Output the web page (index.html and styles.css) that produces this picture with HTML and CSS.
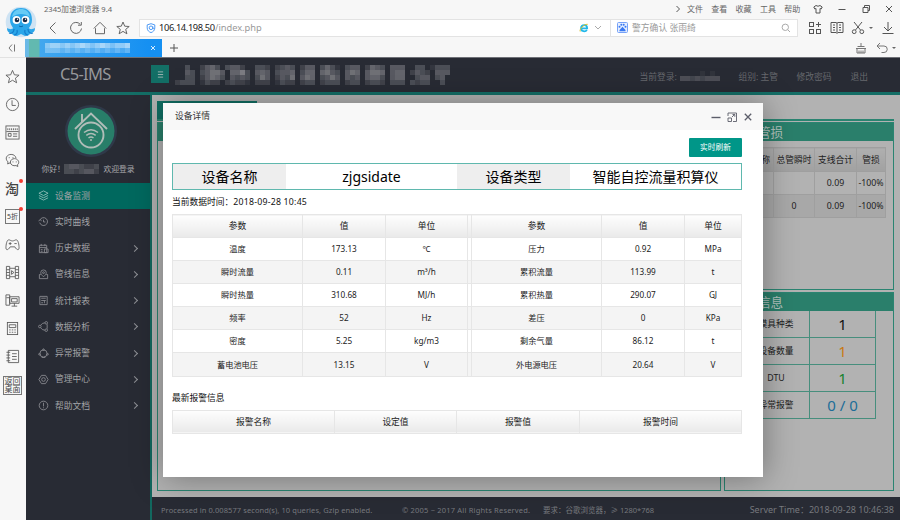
FILE: index.html
```html
<!DOCTYPE html>
<html lang="zh-CN">
<head>
<meta charset="utf-8">
<title>C5-IMS</title>
<link rel="stylesheet" href="styles.css">
</head>
<body>
<div class="browser">
  <header class="chrome">
    <svg class="mascot" viewBox="0 0 32 32">
      <circle cx="16" cy="16" r="15.3" fill="#cfe3f3"/>
      <path d="M5 14C5 5 10 2 16 2s11 3 11 12c0 4-2 6-3 8 1 2 4 1 6 0 0 4-2 5-5 5 0 2-2 3-5 3l-4-2-4 2c-3 0-5-1-5-3-3 0-5-1-5-5 2 1 5 2 6 0-1-2-3-4-3-8z" fill="#2ba6e9"/>
      <path d="M7 11C8 5 12 3 16 3s8 2 9 8C20 7 12 7 7 11z" fill="#67cbf5"/>
      <path d="M9 23c0 3-2 5-5 4m8-3c1 3-1 5-3 5m14-6c0 3 2 5 5 4m-8-3c-1 3 1 5 3 5" fill="none" stroke="#137dcc" stroke-width="1.2"/>
      <circle cx="11.500" cy="14" r="3.900" fill="#fff"/><circle cx="20.500" cy="14" r="3.900" fill="#fff"/>
      <circle cx="12" cy="14" r="2.300" fill="#182a45"/><circle cx="20" cy="14" r="2.300" fill="#182a45"/>
      <circle cx="12.500" cy="13.300" r=".7" fill="#fff"/><circle cx="20.500" cy="13.300" r=".7" fill="#fff"/>
      <path d="M14 20q2 1.500 4 0" stroke="#0b68a9" fill="none"/>
    </svg>
    <div class="chrome-rows">
      <div class="title-row">
        <span class="app-name">2345加速浏览器 9.4</span>
        <svg class="more" viewBox="0 0 6 8"><path d="M1.500 1l3 3-3 3"/></svg>
        <nav class="menus"><span>文件</span><span>查看</span><span>收藏</span><span>工具</span><span>帮助</span></nav>
        <div class="window-buttons">
          <svg viewBox="0 0 10 10"><path d="M3 1.500L.8 3l1 2L3 4.500V9h4V4.500L8.200 5l1-2L7 1.500Q5 3 3 1.500z"/></svg>
          <svg viewBox="0 0 10 10"><path d="M1.500 5.500h7"/></svg>
          <svg viewBox="0 0 10 10"><path d="M2 3.500h5v5H2zM3.500 3.500v-2h5v5H7"/></svg>
          <svg viewBox="0 0 10 10"><path d="M2 2l6 6M8 2L2 8"/></svg>
        </div>
      </div>
      <div class="address-row">
        <div class="nav-icons">
          <svg viewBox="0 0 14 14"><path d="M9.500 1.500L4 7l5.500 5.500"/></svg>
          <svg viewBox="0 0 14 14"><path d="M12.500 7.500a5.500 5.500 0 1 1-1.300-4.200M12.300 1v3.200H9"/></svg>
          <svg viewBox="0 0 14 14"><path d="M.8 7.500L7 1.300l6.200 6.200M2.500 7.200v5.500h9V7.200"/></svg>
          <svg viewBox="0 0 14 14"><path d="M7 1l1.700 4.200 4.500.3-3.500 2.900 1.200 4.400L7 10.400l-3.900 2.400 1.200-4.400L.8 5.500l4.500-.3z"/></svg>
        </div>
        <div class="url">
          <svg class="shield" viewBox="0 0 10 10"><path d="M5 .7l3.800 1.200v3C8.800 7.500 7 8.900 5 9.600 3 8.900 1.200 7.500 1.200 4.900v-3z"/><circle cx="5" cy="4.800" r="1.800"/><path d="M6.800 3.500v2q.8 1 1.500-.5"/></svg>
          <span class="host">106.14.198.50</span><span class="path">/index.php</span>
          <svg class="ie" viewBox="0 0 10 10"><path d="M2.200 5.300h6q0-3.100-3-3.100-3.200 0-3.200 3.100 0 3 3.200 3 2 0 2.700-1.500" stroke="#22b8ea" stroke-width="1.700" fill="none"/><path d="M1.200 8.500C.2 6.500 4.500 1 8.700 1.300" stroke="#d9c22a" stroke-width="1" fill="none"/></svg>
          <svg class="drop" viewBox="0 0 8 6"><path d="M1 1l3 3 3-3"/></svg>
        </div>
        <div class="search">
          <svg class="paw" viewBox="0 0 11 11"><rect x=".5" y=".5" width="10" height="10" rx="1" fill="#e7effe" stroke="#77a2f8"/><g fill="#3979f2"><circle cx="2.500" cy="4.800" r="1"/><circle cx="4.300" cy="2.800" r="1"/><circle cx="6.700" cy="2.800" r="1"/><circle cx="8.500" cy="4.800" r="1"/><path d="M5.500 4.700L8.500 8v1.300H2.500V8z"/></g></svg>
          <span>警方确认 张雨绮</span>
          <svg class="lens" viewBox="0 0 10 10"><circle cx="4.300" cy="4.300" r="3.200"/><path d="M6.700 6.700L9 9"/></svg>
        </div>
        <div class="tools">
          <svg viewBox="0 0 14 14"><rect x="1.500" y="1.500" width="4" height="4"/><rect x="1.500" y="8.500" width="4" height="4"/><rect x="8.500" y="8.500" width="4" height="4"/><path d="M10.500 1v5M8 3.500h5"/></svg>
          <svg viewBox="0 0 14 14"><path d="M1 1.500h5l1 .7 1-.7h5v10H8l-1 1-1-1H1zM7 2v10M3 4h2M3 6.500h2M3 9h2M9 4h2M9 6.500h2M9 9h2"/></svg>
          <svg viewBox="0 0 14 14"><path d="M3 1l6.500 8M11 1L4.500 9"/><circle cx="3.200" cy="10.700" r="1.900"/><circle cx="10.800" cy="10.700" r="1.900"/></svg>
          <i class="caret"></i>
          <svg viewBox="0 0 14 14"><path d="M7 1v9M3 6l4 4 4-4M1.500 12.500h11"/></svg>
        </div>
      </div>
    </div>
  </header>

  <div class="tab-row">
    <svg class="collapse" viewBox="0 0 10 10"><path d="M5 1.500L2 5l3 3.500M7.500 1.500v7"/></svg>
    <div class="tab">
      <svg class="tab-mosaic" data-mosaic="tab" viewBox="0 0 105 10"></svg>
      <svg class="tab-close" viewBox="0 0 6 6"><path d="M1 1l4 4M5 1L1 5"/></svg>
    </div>
    <svg class="plus" viewBox="0 0 10 10"><path d="M5 1v8M1 5h8"/></svg>
    <div class="tab-tools">
      <svg viewBox="0 0 12 12"><path d="M6 1v3M2.500 4.500h7M1 6.500h10M2 6.500v4.500h8V6.500M4 11V8.500M6 11V8.500M8 11V8.500"/></svg>
      <svg viewBox="0 0 12 12"><path d="M4 1L1 4l3 3M1.300 4H8a3 3 0 0 1 0 6.500H5.500"/></svg>
      <i class="caret"></i>
    </div>
  </div>

  <div class="body-row">
    <aside class="rail">
      <svg viewBox="0 0 16 16"><path d="M8 1.500l2 4.700 5 .4-3.900 3.200 1.300 4.900L8 12l-4.400 2.700 1.300-4.900L1 6.600l5-.4z"/></svg>
      <svg viewBox="0 0 16 16"><circle cx="8" cy="8" r="6.500"/><path d="M7.500 3.500V9h4"/></svg>
      <svg viewBox="0 0 16 16"><rect x="1" y="1" width="14" height="14"/><path d="M3 3.500v2M5 3.500v2M7 3.500v2M9 3.500v2M11 3.500v2M13 3.500v2M1.500 7h13M3.500 9h3v3h-3zM8.500 9.500H13M8.500 12H13" /></svg>
      <svg viewBox="0 0 16 16"><path d="M6 10.200l-3.200 1.500.4-2.200C-1 5.500 2.500 1.500 6.500 1.500c3 0 5 1.900 5.200 4M10.200 6c-2.500 0-4.500 1.700-4.500 3.800 0 3 3.300 4.300 6 3.600l2 1-.4-1.800C16.500 9.900 13.500 6 10.200 6z"/><path d="M4.500 4.500v1M8.500 4.500v1M8.500 9v1M12 9v1"/></svg>
      <span class="rail-word"><b>淘</b><i class="dot"></i></span>
      <span class="rail-word boxed"><b>5折</b><i class="dot"></i></span>
      <svg viewBox="0 0 16 16"><path d="M4 3C2 3 1 8 1 11.500 1 15 4 13.500 5.500 10.500h5C12 13.500 15 15 15 11.500 15 8 14 3 12 3c-1.500 0-2 1.200-4 1.200S5.500 3 4 3zM5.500 5.500v3M4 7h3M10 7h2.500"/></svg>
      <svg viewBox="0 0 16 16"><path d="M1.500 1.500v13h3.500v-13zM11 1.500v13h3.500v-13zM5 3.500h6M5 12.500h6M1.500 5H5M1.500 8H5M1.500 11H5M11 5h3.500M11 8h3.500M11 11h3.500M7 6v4l2.500-2z"/></svg>
      <svg viewBox="0 0 16 16"><path d="M1 2h4v11H1zM5 4h10v7H5zM7 6h6v3.500H7zM10 11v3M7 14h6M1.500 5H5"/></svg>
      <svg viewBox="0 0 16 16"><rect x="2.500" y="1.500" width="11" height="13"/><path d="M4.500 4h7v3h-7zM4.500 9.500h1.500M7.200 9.500h1.600M10 9.500h1.500M4.500 12h1.500M7.200 12h1.600M10 12h1.500"/></svg>
      <svg viewBox="0 0 16 16"><path d="M3.500 1.500h11v13h-11zM1.500 3.500h4M1.500 6.500h4M1.500 9.500h4M1.500 12.500h4M7.500 5h5M7.500 8h5M7.500 11h5"/></svg>
      <span class="desk">返回桌面</span>
    </aside>

    <div class="app">
      <header class="app-head">
        <div class="brand">C5-IMS</div>
        <div class="toggle"><svg viewBox="0 0 8 8"><path d="M1 1h6M1 4h6M1 7h6"/></svg></div>
        <svg class="title-mosaic" data-mosaic="title" viewBox="0 0 275 20"></svg>
        <div class="user-links"><span class="login">当前登录:</span><svg class="user-mosaic" data-mosaic="user" viewBox="0 0 40 10"></svg><span class="group">组别: 主管</span><span class="pwd">修改密码</span><span>退出</span></div>
      </header>

      <div class="app-body">
        <nav class="sidebar">
          <svg class="avatar" viewBox="0 0 54 54">
            <circle cx="27" cy="27" r="26" fill="#2f3949"/><circle cx="27" cy="27" r="23.500" fill="#287e69"/>
            <g fill="none" stroke="#b0bdb8" stroke-width="1.900"><circle cx="27" cy="31" r="12.500"/><path d="M11 25L27 9.500 43 25"/><path d="M18 18V10"/></g>
            <g fill="none" stroke="#b0bdb8" stroke-width="1.500"><path d="M20 28.500q7-5.500 14 0M22.300 31.300q4.700-3.600 9.400 0M24.500 34q2.500-2 5 0"/></g><circle cx="27" cy="36" r="1" fill="#b0bdb8"/>
          </svg>
          <div class="hello"><span>你好<em>！</em></span><svg data-mosaic="name" viewBox="0 0 35 10"></svg><span>欢迎登录</span></div>
          <ul class="menu">
            <li class="active"><svg viewBox="0 0 12 12"><path d="M6 1l5 2.500L6 6 1 3.500zM1 6l5 2.500L11 6M1 8.500L6 11l5-2.500"/></svg><span>设备监测</span></li>
            <li><svg viewBox="0 0 12 12"><path d="M2.200 4.200a4.300 4.300 0 1 1-.3 3M.7 5.700l1.500-1.800L4 5.300M6 4v2.500h2"/></svg><span>实时曲线</span></li>
            <li class="sub"><svg viewBox="0 0 12 12"><path d="M1.500 2.500h8v8h-8zM1.500 5h8M3.500 1v2.500M7.500 1v2.500M3 7.200h2M3 9h2M7 6.500h4v4H7z"/></svg><span>历史数据</span><i></i></li>
            <li class="sub"><svg viewBox="0 0 12 12"><path d="M3 6H1.500v4.500h9V6H9"/><path d="M6 8.500C4 6.500 3 5.500 3 4a3 3 0 0 1 6 0c0 1.500-1 2.500-3 4.500z"/><circle cx="6" cy="4" r="1"/></svg><span>管线信息</span><i></i></li>
            <li class="sub"><svg viewBox="0 0 12 12"><path d="M2 1.500h8v9H2zM3.500 3.500h5M3.500 6h5M3.500 8.500h2M7 6v3"/></svg><span>统计报表</span><i></i></li>
            <li class="sub"><svg viewBox="0 0 12 12"><path d="M3 4.500Q4.500 2 7.500 2M3 7.500Q4.500 10 7.500 10M10 3.500v5"/><circle cx="2" cy="6" r="1.400"/><circle cx="9" cy="2" r="1.400"/><circle cx="9" cy="10" r="1.400"/></svg><span>数据分析</span><i></i></li>
            <li class="sub"><svg viewBox="0 0 12 12"><circle cx="6" cy="6" r="3.900"/><circle cx="6" cy="1.800" r=".9"/><circle cx="1.600" cy="6.800" r=".9"/><circle cx="10.400" cy="6.800" r=".9"/><path d="M4 10.300h4"/></svg><span>异常报警</span><i></i></li>
            <li class="sub"><svg viewBox="0 0 12 12"><path d="M3.800 1.500h4.400L11 6l-2.800 4.500H3.800L1 6z"/><circle cx="6" cy="6" r="2"/></svg><span>管理中心</span><i></i></li>
            <li class="sub"><svg viewBox="0 0 12 12"><circle cx="6" cy="6" r="4.700"/><path d="M6 3v4M6 8v1"/></svg><span>帮助文档</span><i></i></li>
          </ul>
        </nav>

        <div class="workspace">
          <main class="main">
            <div class="tab-strip"><span></span></div>
            <div class="columns">
              <section class="panel"><h2></h2></section>
              <div class="right-col">
                <section class="panel loss">
                  <h2>管损</h2>
                  <table class="loss-table">
                    <tr><th class="w-name">名称</th><th class="w-main">总管瞬时</th><th class="w-sum">支线合计</th><th>管损</th></tr>
                    <tr><td></td><td></td><td>0.09</td><td>-100%</td></tr>
                    <tr class="even"><td></td><td>0</td><td>0.09</td><td>-100%</td></tr>
                  </table>
                </section>
                <section class="panel">
                  <h2>信息</h2>
                  <table class="info-table">
                    <tr><th>模具种类</th><td>1</td></tr>
                    <tr><th>设备数量</th><td class="orange">1</td></tr>
                    <tr><th>DTU</th><td class="green">1</td></tr>
                    <tr><th>异常报警</th><td class="blue">0 / 0</td></tr>
                  </table>
                </section>
              </div>
            </div>
          </main>
          <footer class="foot"><span class="proc">Processed in 0.008577 second(s), 10 queries, Gzip enabled.</span><span class="copy">© 2005 ~ 2017 All Rights Reserved.</span><span class="req">要求<em>：</em>谷歌浏览器<em>，</em>≥ 1280*768</span><span class="time">Server Time<em>：</em>2018-09-28 10:46:38</span></footer>
        </div>
      </div>

      <div class="dialog">
        <div class="dialog-head">
          <span>设备详情</span>
          <svg viewBox="0 0 10 10"><path d="M.5 5.500h9" stroke-width="1.400"/></svg>
          <svg viewBox="0 0 10 10"><path d="M1 4V1h8.500v8.500H6M1 6h3.500v3.500H1zM5 5l2.500-2.500M5.500 2.500h2.300v2.300"/></svg>
          <svg viewBox="0 0 10 10"><path d="M1.800 1.800l6.400 6.400M8.200 1.800L1.800 8.200" stroke-width="1.300"/></svg>
        </div>
        <div class="dialog-body">
          <div class="actions"><button>实时刷新</button></div>
          <div class="device"><b>设备名称</b><span>zjgsidate</span><b>设备类型</b><span>智能自控流量积算仪</span></div>
          <p class="stamp">当前数据时间<em>：</em><time>2018-09-28 10:45</time></p>
          <table class="grid params">
            <colgroup><col class="c1"><col class="c2"><col class="c3"><col class="c4"><col class="c5"><col class="c6"><col class="c7"></colgroup>
            <tr><th>参数</th><th>值</th><th>单位</th><th></th><th>参数</th><th>值</th><th>单位</th></tr>
            <tr><td>温度</td><td>173.13</td><td>℃</td><td></td><td>压力</td><td>0.92</td><td>MPa</td></tr>
            <tr><td>瞬时流量</td><td>0.11</td><td>m³/h</td><td></td><td>累积流量</td><td>113.99</td><td>t</td></tr>
            <tr><td>瞬时热量</td><td>310.68</td><td>MJ/h</td><td></td><td>累积热量</td><td>290.07</td><td>GJ</td></tr>
            <tr><td>频率</td><td>52</td><td>Hz</td><td></td><td>差压</td><td>0</td><td>KPa</td></tr>
            <tr><td>密度</td><td>5.25</td><td>kg/m3</td><td></td><td>剩余气量</td><td>86.12</td><td>t</td></tr>
            <tr><td>蓄电池电压</td><td>13.15</td><td>V</td><td></td><td>外电源电压</td><td>20.64</td><td>V</td></tr>
          </table>
          <p class="alarm-title">最新报警信息</p>
          <table class="grid alarms">
            <colgroup><col class="a1"><col class="a2"><col class="a3"><col class="a4"></colgroup>
            <tr><th>报警名称</th><th>设定值</th><th>报警值</th><th>报警时间</th></tr>
          </table>
        </div>
      </div>
    </div>
  </div>
</div>
<script src="mosaic.js"></script>
</body>
</html>
```
FILE: mosaic.js
```js
// Pixelated blocks that hide private names. Each digit is the opacity of a 5px tile.
const tiles = {
  title: { color: "#a0a0a4", rows: [
    "0030024530344200332023430244035310344025430444003301333",
    "0043034664055730454034450355056430465046650455024320444",
    "0033024653043430364024360465034640434045530455003440340",
    "2333013220232210222013220233023330233023320333032330030"
  ]},
  user: { color: "#85858a", rows: ["00001010", "44343444"] },
  name: { color: "#9a9a9f", rows: ["3443223", "3323442"] },
  tab: { color: "#ffffff", rows: ["000455454565456545560", "000333232323232323230"] }
};

document.querySelectorAll("[data-mosaic]").forEach(svg => {
  const { color, rows } = tiles[svg.dataset.mosaic];
  rows.forEach((row, y) => [...row].forEach((level, x) => {
    if (level === "0") return;
    const r = document.createElementNS("http://www.w3.org/2000/svg", "rect");
    r.setAttribute("x", x * 5);
    r.setAttribute("y", y * 5);
    r.setAttribute("width", 5);
    r.setAttribute("height", 5);
    r.setAttribute("fill", color);
    r.setAttribute("fill-opacity", level / 10);
    svg.append(r);
  }));
});
```
FILE: styles.css
```css
* { box-sizing: border-box; }
body { margin: 0; font: 8.75px/12px "Noto Sans", "Noto Sans CJK SC", sans-serif; color: #222; }
svg { display: block; flex: none; fill: none; stroke: #555; stroke-width: 1; }
svg [fill]:not([stroke]), [data-mosaic] rect { stroke: none; }
h2, p, ul { margin: 0; padding: 0; }
table { border-collapse: collapse; table-layout: fixed; }
/* full-width punctuation centred in its cell */
em { font-style: normal; font-family: "Noto Sans CJK TC", sans-serif; }

.browser { width: 900px; height: 520px; overflow: hidden; display: flex; flex-direction: column; background: #f7f7f7; }

/* browser chrome */
.chrome { height: 38px; display: flex; padding-left: 5px; }
.mascot { width: 32px; height: 32px; margin-top: 6px; stroke: none; }
.chrome-rows { flex: 1; display: flex; flex-direction: column; }
.title-row { height: 18px; display: flex; align-items: center; padding-left: 7px; color: #666; font-size: 8px; }
.app-name { width: 631px; white-space: nowrap; font-size: 7.600px; }
.more { width: 6px; height: 8px; }
.menus { display: flex; gap: 8.3px; margin-left: 6px; }
.menus span { width: 16px; white-space: nowrap; }
.window-buttons { display: flex; gap: 13.7px; margin-left: 13px; }
.window-buttons svg { width: 10px; height: 10px; }
.address-row { height: 19px; display: flex; align-items: center; padding-left: 9px; }
.nav-icons { display: flex; gap: 9.3px; width: 93px; }
.nav-icons svg { width: 14px; height: 14px; stroke: #666; }
.url { width: 472px; height: 18px; background: #fff; border: 1px solid #e3e3e3; display: flex; align-items: center; padding-left: 6px; }
.shield { width: 10px; height: 10px; stroke: #4f9bf5; margin-right: 3px; }
.host, .path { font: 9.3px/14px "Noto Sans", sans-serif; }
.host { letter-spacing: -.380px; color: #222; }
.path { color: #999; letter-spacing: -.050px; margin-left: .4px; }
.ie { width: 10px; height: 10px; margin-left: auto; }
.drop { width: 8px; height: 6px; margin: 0 8px 0 5px; stroke: #aaa; }
.search { width: 187px; height: 18px; background: #fff; border: 1px solid #e3e3e3; border-left: 0; display: flex; align-items: center; padding: 0 6px 0 6px; color: #999; font-size: 8.800px; }
.paw { width: 11px; height: 11px; margin-right: 4px; }
.lens { width: 10px; height: 10px; margin-left: auto; stroke: #aaa; }
.tools { display: flex; align-items: center; margin-left: 10px; }
.tools svg { width: 14px; height: 14px; margin-right: 7.500px; }
.caret { border: 2px solid transparent; border-top-color: #666; border-bottom: 0; height: 2px; }
.tools .caret { margin: 0 8px 0 -4px; }
.tab-row { height: 19px; display: flex; align-items: center; }
.collapse { width: 10px; height: 10px; margin: 0 8px 0 7px; stroke: #777; }
.tab { width: 137px; height: 18px; margin-top: 1px; background: linear-gradient(90deg, #6ab7ea 0, #6abbe0 4px, #62b9b0 4px, #62b9b0 14px, #42a7ee 15px, #1590f2 90%); display: flex; align-items: center; justify-content: space-between; padding: 0 6px 0 5px; }
.tab-mosaic { width: 105px; height: 10px; }
.tab-close { width: 6px; height: 6px; stroke: #d6ebfc; }
.plus { width: 10px; height: 10px; margin-left: 7px; }
.tab-tools { margin-left: auto; display: flex; align-items: center; gap: 9px; padding-right: 4px; }
.tab-tools svg { width: 12px; height: 12px; stroke: #777; }
.tab-tools .caret { margin-left: -5px; }

.body-row { flex: 1; display: flex; min-height: 0; }
.rail { width: 26px; padding: 4.500px 1px 0 0; display: flex; flex-direction: column; align-items: center; border-top: 1px solid #e2e2e2; }
.rail > * { flex: none; width: 15px; height: 15px; margin: 6px 0 7.100px; stroke-width: .9; }
.rail-word { position: relative; color: #444; }
.rail-word b { font-size: 14px; line-height: 15px; font-weight: 500; }
.boxed { border: 1px solid #777; }
.boxed b { display: block; font: 7px/14px "Noto Sans", "Noto Sans CJK SC", sans-serif; margin-left: 1px; white-space: nowrap; }
.dot { position: absolute; right: -3px; top: -2px; width: 4px; height: 4px; border-radius: 50%; background: #f33c30; }
.boxed .dot { right: -4px; top: -3px; }
.rail .desk { width: 19px; height: 19px; margin-top: 4px; border: 1px solid #777; font-size: 8px; line-height: 8.500px; text-align: center; color: #444; }

/* application */
.app { position: relative; flex: 1; display: flex; flex-direction: column; min-width: 0; overflow: hidden; background: #282b34; border-top: 1px solid #6f7177; }
.app-head { height: 37px; border-bottom: 3px solid #146e66; display: flex; align-items: center; flex: none; color: #66686d; }
.brand { width: 125px; padding-left: 34px; font: 16.500px/24px "Noto Sans", sans-serif; letter-spacing: -.7px; color: #97989b; transform: translateY(-1px); }
.toggle { width: 18px; height: 18px; background: #136f66; margin-top: -3px; padding: 6px 5.500px; }
.toggle svg { width: 7px; height: 7px; stroke: #a7b9b7; }
.title-mosaic { width: 275px; height: 20px; margin-left: 6px; }
.user-links { margin-left: auto; display: flex; align-items: center; padding: 4px 32px 0 0; white-space: nowrap; }
.login { width: 40px; }
.user-mosaic { width: 40px; height: 10px; margin-top: -3px; }
.group { width: 58px; margin-left: 19px; }
.pwd { width: 54px; }
.app-body { flex: 1; display: flex; min-height: 0; }
.sidebar { width: 126px; border-right: 2px solid #12685f; display: flex; flex-direction: column; align-items: center; color: #a3a4a7; }
.avatar { width: 54px; height: 54px; margin: 8.500px 0 0 5px; flex: none; }
.hello { display: flex; align-items: center; margin-top: 5px; font-size: 7.800px; height: 12px; white-space: nowrap; color: #a8a9ac; }
.hello svg { width: 35px; height: 10px; margin-right: 4px; }
.hello span:first-child { width: 23px; }
.menu { align-self: stretch; list-style: none; margin-top: 8px; }
.menu li { height: 26.250px; display: flex; align-items: center; padding: 0 13px 0 12px; }
.menu svg { width: 11px; height: 11px; stroke: #85878c; margin-right: 6px; }
.menu .active { background: #00685e; }
.menu .active svg { stroke: #8bbab5; }
.menu i { width: 5px; height: 5px; border: solid #8e9095; border-width: 1px 1px 0 0; transform: rotate(45deg); margin-left: auto; }

.workspace { flex: 1; display: flex; flex-direction: column; min-width: 0; }
.main { flex: 1; background: #b2b2b2; padding: 6px 6px 6px 5px; display: flex; flex-direction: column; min-height: 0; }
.tab-strip { height: 20px; border-bottom: 2px solid #2a8471; }
.tab-strip span { display: block; width: 100px; height: 18px; background: #116e63; }
.columns { flex: 1; display: flex; gap: 3px; padding-top: 1px; min-height: 0; }
.columns > .panel { flex: 1; }
.right-col { width: 170px; display: flex; flex-direction: column; gap: 2px; }
.panel { border: 1px solid #2a8471; }
.right-col .panel { flex: 1; }
.right-col .loss { flex: none; height: 168px; }
.panel h2 { height: 18px; background: #2a7f6b; color: #b2c3be; font: 12.600px/19px "Noto Sans", "Noto Sans CJK SC", sans-serif; padding-left: 33px; }
.loss-table { width: 160px; margin: 6px 0 0 1px; text-align: center; color: #222; }
.loss-table th { height: 24px; background: linear-gradient(#afafaf, #a1a1a1); font-weight: 400; white-space: nowrap; }
.loss-table th, .loss-table td { border: 1px solid #9f9f9f; padding: 0; }
.loss-table td { height: 23px; }
.loss-table .even { background: #a8a8a8; }
.w-name { width: 47px; text-align: right; padding-right: 3px !important; }
.w-main { width: 41px; }
.w-sum { width: 42px; }
.info-table { width: 151px; text-align: center; }
.info-table th { font-weight: 400; width: 84px; padding: 0 0 0 17px; }
.info-table th, .info-table td { border: 1px solid #478e7d; height: 26.800px; }
.info-table tr:first-child > * { border-top: 0; }
.info-table td { padding: 0; font-size: 15px; color: #111; }
.info-table td.orange { color: #c97912; }
.info-table td.green { color: #14822e; }
.info-table td.blue { color: #1d6d98; }
.foot { height: 23px; flex: none; display: flex; align-items: center; padding: 3px 6px 0 9px; color: #77797e; font-size: 7.500px; white-space: nowrap; }
.proc { width: 241px; letter-spacing: .085px; }
.copy { width: 141px; letter-spacing: .190px; }
.time { margin-left: auto; font-size: 9px; }

/* dialog above the page */
.dialog { position: absolute; left: 137px; top: 45px; width: 600px; height: 374px; background: #fff; box-shadow: 1px 1px 30px rgba(0, 0, 0, .35); }
.dialog-head { height: 27px; background: #f8f8f8; display: flex; align-items: center; gap: 6px; padding: 0 10px 0 12px; color: #333; }
.dialog-head span { margin: -2px auto 0 0; }
.dialog-head svg { width: 10px; height: 10px; stroke: #5c5e6a; stroke-width: .9; }
.dialog-body { padding: 8px 21px 0 9px; }
.actions { display: flex; justify-content: flex-end; }
button { width: 53px; height: 19px; border: 0; border-radius: 1px; padding: 0; background: #009688; color: #fff; font: 7.700px/19px "Noto Sans", "Noto Sans CJK SC", sans-serif; }
.device { display: grid; grid-template-columns: 113px 171px 113px 1fr; margin-top: 6px; height: 27px; border: 1px solid #5fb8ae; text-align: center; font-size: 14px; line-height: 25px; color: #000; }
.device b { font-weight: 400; background: #eee; }
.stamp { margin-top: 6px; height: 12px; line-height: 12px; color: #111; }
.stamp time { letter-spacing: .220px; }
.grid { width: 570px; text-align: center; }
.grid th, .grid td { border: 1px solid #e6e6e6; padding: 0; }
.grid th { font-weight: 400; height: 23px; background: linear-gradient(#fefefe, #e9e9e9); }
.grid td { height: 23.100px; font-size: 8.200px; }
.grid tr:nth-child(odd) td { background: #f4f4f4; }
.params { margin-top: 6px; }
.c1 { width: 130px; } .c2 { width: 83px; } .c3 { width: 82px; } .c4 { width: 4px; } .c5 { width: 130px; } .c6 { width: 83px; }
.alarm-title { margin-top: 15px; color: #111; }
.alarms { margin-top: 6px; }
.a1 { width: 162px; } .a2 { width: 122px; } .a3 { width: 123px; }
```
